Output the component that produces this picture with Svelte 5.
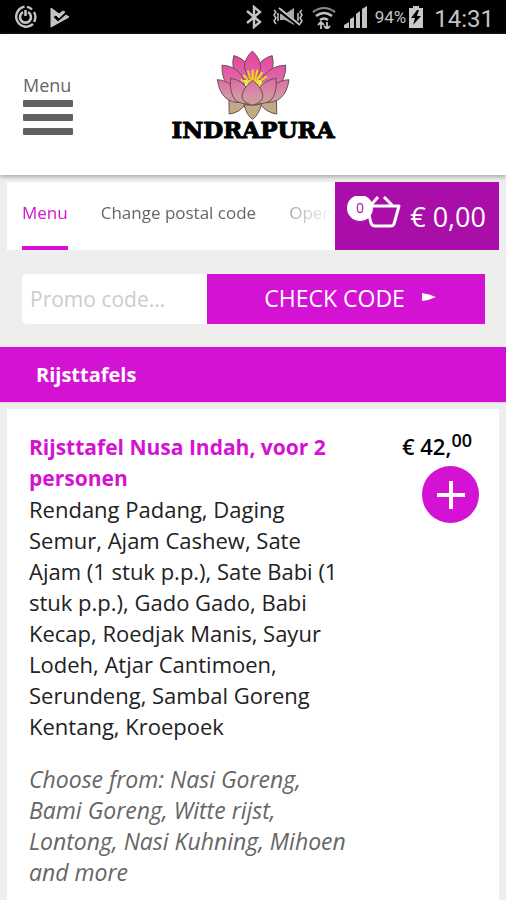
<script>
  const tabs = [
    { label: 'Menu', active: true },
    { label: 'Change postal code' },
    { label: 'Open' }
  ];
  const product = {
    name: 'Rijsttafel Nusa Indah, voor 2 personen',
    description:
      'Rendang Padang, Daging Semur, Ajam Cashew, Sate Ajam (1 stuk p.p.), Sate Babi (1 stuk p.p.), Gado Gado, Babi Kecap, Roedjak Manis, Sayur Lodeh, Atjar Cantimoen, Serundeng, Sambal Goreng Kentang, Kroepoek',
    options: 'Choose from: Nasi Goreng, Bami Goreng, Witte rijst, Lontong, Nasi Kuhning, Mihoen and more'
  };
  let promo = $state('');
  let count = $state(0);
</script>

<div class="app">
  <div class="status">
    <svg class="left" width="56" height="24" viewBox="0 0 56 24" fill="none" stroke="#c4c4c4">
      <path d="M10.500 1.800A10 10 0 1 0 19 19M13 1.800A10 10 0 0 1 18 4.500M20 7A10 10 0 0 1 20 17" stroke-width="2.400" />
      <path d="M9 7.200A5.500 5.500 0 1 0 14 7.200M11.500 5v6" stroke-width="2.600" />
      <path d="M37 3v19l18-10-3-2-8 7-5-5 3-2 3 3 6-6-2-1-4 3z" fill="#c4c4c4" stroke="#c4c4c4" />
    </svg>
    <svg width="122" height="24" viewBox="0 0 122 24" fill="none" stroke="#c4c4c4">
      <path d="m1 6 13 11-6 5V2l6 5L1 18" stroke-width="2.400" />
      <path d="m28 5 2 2-2 3 2 3-2 3 2 3M32 8v8M56 5l-2 2 2 3-2 3 2 3-2 3M52 8v8" stroke-width="1.500" />
      <path d="M34 9h5l9-6v17l-9-5h-5z" fill="#aaa" stroke="none" />
      <path d="m32 4 22 17" stroke="#000" stroke-width="4" />
      <path d="m33 3 21 17" stroke-width="2" />
      <path d="M67 7q11-8 22 0" stroke="#888" stroke-width="2.200" />
      <path d="M70 11q8-6 16 0M74 15q4-3 8 0" stroke-width="2.400" />
      <path d="M75 24v-7m-3 3 3-3 3 3M81 17v7m-3-3 3 3 3-3" stroke-width="1.800" />
      <path d="M98 23v-3l5-3v6zM104 23v-9l4-2v11zM110 23V9l4-3v17zM116 23V4l5-3v22z" fill="#c4c4c4" stroke="none" />
    </svg>
    <span class="percent">94%</span>
    <svg class="battery" width="16" height="22" viewBox="0 0 16 22">
      <path d="M1 2h4V0h6v2h4v20H1z" fill="#c9c9c9" />
      <path d="m9 4-6 8h4l-2 7 8-9H9l2-6z" fill="#000" />
    </svg>
    <time>14:31</time>
  </div>

  <header>
    <button class="menu" type="button">
      <span>Menu</span>
      <i></i><i></i><i></i>
    </button>
    <a class="logo" href="#home">
      <svg width="76" height="70" viewBox="172 40 222 212" aria-hidden="true">
        <defs>
          <linearGradient id="petal" gradientUnits="userSpaceOnUse" x1="0" y1="42" x2="0" y2="250">
            <stop offset="0" stop-color="#e8419f" />
            <stop offset=".35" stop-color="#e060a8" />
            <stop offset=".65" stop-color="#d592a5" />
            <stop offset=".84" stop-color="#c3ab87" />
            <stop offset="1" stop-color="#b9ae7c" />
          </linearGradient>
        </defs>
        <g fill="url(#petal)" stroke="#655052" stroke-width="3" stroke-linejoin="round">
          <path d="M210 190 211 234Q243 230 260 204L304 204Q325 230 355 234L354 190z" />
          <path d="M225 57Q252 65 266 84L280 130H237Q215 92 225 57zM341 57Q314 65 300 84L286 130H328Q351 92 341 57z" />
          <path d="M281 43Q256 67 257 94Q260 115 281 130Q306 113 306 92Q306 67 281 43z" />
          <path d="M189 86Q226 87 250 118L260 158H215Q187 130 189 86zM382 86Q340 87 316 118L306 158H352Q384 130 382 86z" />
        </g>
        <g stroke="#f1de19" stroke-width="6" stroke-linecap="round">
          <path d="m270 145-22-15m26 11-19-24m23 19-10-31m14 31v-35m5 35 9-33m-5 35 19-29m-14 33 26-21m-27 27 28-10" />
        </g>
        <g stroke="#e9902c" stroke-width="2"><path d="m272 140-15-17m20 14-5-20m13 18 5-21m2 24 16-16" /></g>
        <g fill="url(#petal)" stroke="#655052" stroke-width="3" stroke-linejoin="round">
          <path d="M175 130Q200 131 218 147L250 199Q186 204 175 130zM392 130Q365 131 347 147L315 199Q382 204 392 130z" />
          <path d="M215 125Q253 133 267 160L278 204Q246 205 230 192Q211 171 215 125zM353 125Q312 133 299 160L288 204Q320 205 337 192Q357 171 353 125z" />
          <path d="M256 205Q270 208 281 207Q297 208 309 202Q302 235 282 250Q262 236 256 205z" />
          <path d="M282 132Q250 157 250 181Q252 200 281 207Q311 200 313 179Q311 154 282 132z" />
        </g>
      </svg>
      <strong>INDRAPURA</strong>
    </a>
  </header>

  <main>
    <div class="bar">
      <nav>
        {#each tabs as tab}
          <a href="#tab" class:active={tab.active}>{tab.label}</a>
        {/each}
      </nav>
      <button class="cart" type="button" aria-label="Shopping cart">
        <svg width="55" height="36" viewBox="0 0 55 36" fill="none" stroke="#fff" stroke-width="3" stroke-linejoin="round">
          <path d="M20 12h32l-5 18q-1 2-3 2H28q-3 0-4-3l-4-16M24 11l7-8M37 3l8 8" transform="translate(0 -2)" />
          <circle cx="13" cy="12" r="13" fill="#fff" stroke="none" />
          <text x="13" y="17" text-anchor="middle">{count}</text>
        </svg>
        <span>€ 0,00</span>
      </button>
    </div>

    <form class="promo" onsubmit={(e) => e.preventDefault()}>
      <input type="text" aria-label="Promo code" placeholder="Promo code..." bind:value={promo} />
      <button type="submit">
        <span>CHECK CODE</span>
        <svg width="14" height="10" viewBox="0 0 14 10"><path d="M0 0q7 1 14 4-6 3-14 4z" fill="#fff" /></svg>
      </button>
    </form>

    <h2>Rijsttafels</h2>

    <article>
      <div class="info">
        <h3>{product.name}</h3>
        <p>{product.description}</p>
        <p class="options">{product.options}</p>
      </div>
      <div class="buy">
        <div class="price">€ 42,<sup>00</sup></div>
        <button type="button" aria-label="Add to cart" onclick={() => count++}>
          <svg width="28" height="28" viewBox="0 0 28 28"><path d="M14 0v28M0 14h28" stroke="#fff" stroke-width="4" /></svg>
        </button>
      </div>
    </article>
  </main>
</div>

<style>
  :global(body) {
    margin: 0;
    background: #eee;
  }
  .app {
    min-height: 100vh;
    display: flex;
    flex-direction: column;
    font-family: 'Open Sans', 'Noto Sans', sans-serif;
    color: #222;
  }
  button,
  input {
    font: inherit;
    border: 0;
    padding: 0;
    border-radius: 0;
    box-sizing: border-box;
  }
  h2,
  h3,
  p {
    margin: 0;
  }
  a {
    text-decoration: none;
  }
  .status {
    flex: none;
    height: 34px;
    padding: 0 12px 0 14px;
    display: flex;
    align-items: center;
    background: #000;
    color: #c4c4c4;
    font-family: Roboto, sans-serif;
  }
  .left {
    margin-right: auto;
  }
  .percent {
    margin-left: 7px;
    font-size: 17px;
  }
  .battery {
    margin: 0 10px 0 2px;
  }
  time {
    padding-top: 3px;
    font-size: 24px;
  }
  header {
    flex: none;
    height: 141px;
    display: grid;
    grid-template-columns: 1fr auto 1fr;
    background: #fff;
    box-shadow: 0 2px 4px #aaa;
    z-index: 1;
  }
  .menu {
    justify-self: start;
    align-self: start;
    margin: 38px 0 0 23px;
    width: 50px;
    display: flex;
    flex-direction: column;
    gap: 7px;
    background: none;
    color: #666;
    font-size: 18px;
    line-height: 26px;
    text-align: left;
  }
  .menu span {
    margin-bottom: -5px;
  }
  .menu i {
    height: 7px;
    border-radius: 1px;
    background: #606060;
  }
  .logo {
    display: flex;
    flex-direction: column;
    align-items: center;
    padding-top: 16px;
    color: #000;
  }
  .logo strong {
    font: bold 23px/20px 'DejaVu Serif', serif;
    -webkit-text-stroke: 1px #000;
  }
  main {
    flex: 1;
    display: flex;
    flex-direction: column;
    padding-top: 7px;
  }
  .bar {
    flex: none;
    height: 68px;
    margin: 0 7px;
    display: flex;
    background: #fff;
  }
  nav {
    flex: 1;
    min-width: 0;
    display: flex;
    gap: 33px;
    padding-left: 15px;
    -webkit-mask-image: linear-gradient(to left, transparent, #000 80px);
    mask-image: linear-gradient(to left, transparent, #000 80px);
  }
  nav a {
    flex: none;
    box-sizing: border-box;
    height: 68px;
    color: #666;
    font-size: 17px;
    line-height: 62px;
    white-space: nowrap;
  }
  nav .active {
    color: #d412d4;
    border-bottom: 4px solid #d412d4;
  }
  .cart {
    flex: none;
    width: 164px;
    display: flex;
    align-items: center;
    justify-content: space-between;
    padding: 0 13px 4px 12px;
    background: #a90ea9;
    color: #fff;
    font-size: 27px;
  }
  .cart span {
    padding-top: 4px;
  }
  .cart text {
    fill: #a90ea9;
    stroke: none;
    font-size: 14px;
  }
  .promo {
    flex: none;
    display: flex;
    height: 50px;
    margin: 24px 21px 23px 22px;
  }
  .promo input {
    flex: 0 0 40%;
    min-width: 0;
    padding: 0 8px;
    background: #fff;
    border-radius: 5px 0 0 5px;
    font-size: 21px;
  }
  .promo input::placeholder {
    color: #ccc;
    opacity: 1;
  }
  .promo button {
    flex: 1;
    display: flex;
    align-items: center;
    justify-content: center;
    gap: 17px;
    padding: 0 0 2px 8px;
    background: #d412d4;
    color: #fff;
    font-size: 23px;
  }
  h2 {
    flex: none;
    padding: 0 36px;
    background: #d412d4;
    color: #fff;
    font-size: 20px;
    line-height: 55px;
    border-bottom: 1px solid #f3c4f3;
  }
  article {
    flex: 1;
    display: flex;
    justify-content: space-between;
    margin: 6px 7px 0;
    padding: 23px 20px 0 22px;
    background: #fff;
    font-size: 22px;
    line-height: 31px;
  }
  .info {
    flex: 0 1 318px;
  }
  h3 {
    color: #d412d4;
    font-size: 21px;
    line-height: 31px;
  }
  .options {
    margin-top: 22px;
    color: #666;
    font-size: 23px;
    font-style: italic;
  }
  .buy {
    display: flex;
    flex-direction: column;
    align-items: flex-end;
  }
  .price {
    padding-right: 7px;
    color: #000;
    font-weight: 600;
    font-size: 22px;
    line-height: 28px;
  }
  sup {
    font-size: 18px;
    line-height: 0;
  }
  .buy button {
    display: grid;
    place-items: center;
    width: 57px;
    height: 57px;
    margin-top: 6px;
    border-radius: 50%;
    background: #d412d4;
  }
</style>
